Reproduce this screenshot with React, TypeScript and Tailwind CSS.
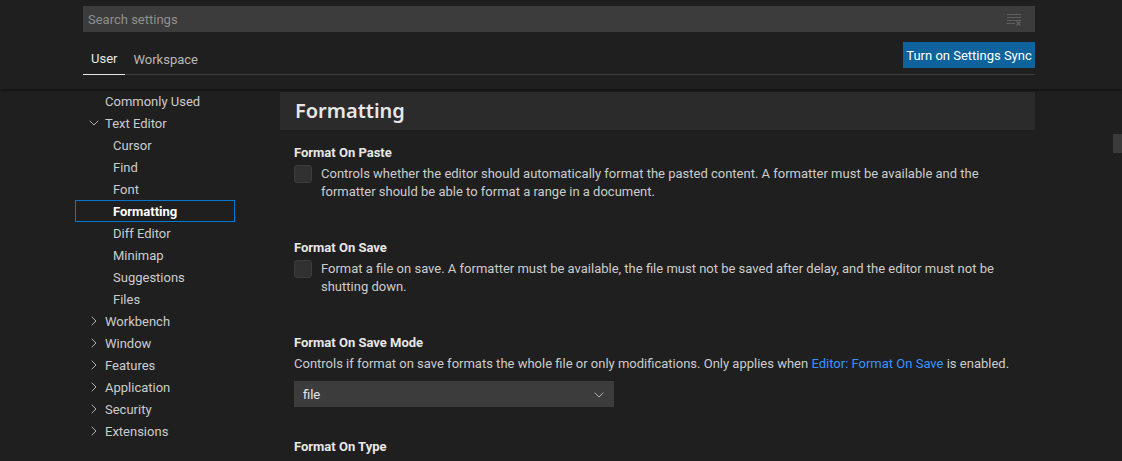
import { ChevronDown, ChevronRight } from 'lucide-react';

type TocItem = { label: string; level: 0 | 1; chevron?: 'open' | 'closed'; selected?: boolean };

const tocItems: TocItem[] = [
  { label: 'Commonly Used', level: 0 },
  { label: 'Text Editor', level: 0, chevron: 'open' },
  { label: 'Cursor', level: 1 },
  { label: 'Find', level: 1 },
  { label: 'Font', level: 1 },
  { label: 'Formatting', level: 1, selected: true },
  { label: 'Diff Editor', level: 1 },
  { label: 'Minimap', level: 1 },
  { label: 'Suggestions', level: 1 },
  { label: 'Files', level: 1 },
  { label: 'Workbench', level: 0, chevron: 'closed' },
  { label: 'Window', level: 0, chevron: 'closed' },
  { label: 'Features', level: 0, chevron: 'closed' },
  { label: 'Application', level: 0, chevron: 'closed' },
  { label: 'Security', level: 0, chevron: 'closed' },
  { label: 'Extensions', level: 0, chevron: 'closed' },
];

function ClearFilterIcon() {
  return (
    <svg width="16" height="16" viewBox="0 0 16 16" fill="none" stroke="#5f5f5f" strokeWidth="1">
      <path d="M1 3.5h14M1 6.5h14M1 9.5h14M1 12.5h8" />
      <path d="M10.5 10.5l4 4M14.5 10.5l-4 4" strokeWidth="1.4" />
    </svg>
  );
}

function Checkbox() {
  return <div className="mt-[1px] h-[18px] w-[18px] shrink-0 rounded-[3px] border border-[#3c3c3c] bg-[#313131]" />;
}

export default function App() {
  return (
    <div className="relative h-[461px] w-full overflow-hidden bg-[#1f1f1f] font-['Roboto',sans-serif] text-[13px] text-[#cccccc]">
      {/* Header */}
      <div className="relative z-10 h-[89px] bg-[#1f1f1f] shadow-[0_1px_3px_rgba(0,0,0,0.6)]">
        <div className="ml-[83px] w-[952px] pt-[6px]">
          <div className="flex h-[26px] items-center justify-between bg-[#3c3c3c] pl-[5px] pr-[13px]">
            <span className="pt-[1px] text-[#8f8f8f]">Search settings</span>
            <ClearFilterIcon />
          </div>
          <div className="mt-[10px] flex h-[33px] items-start justify-between border-b border-[#3c3c3c]">
            <div className="flex h-full">
              <div className="flex h-[33px] items-center border-b border-[#e7e7e7] px-[8px] pt-[2px] text-[#e7e7e7]">User</div>
              <div className="flex h-[33px] items-center px-[8px] pt-[2px] text-[#b8b8b8]">Workspace</div>
            </div>
            <div className="flex h-[26px] w-[132px] items-center justify-center bg-[#0e639c] pt-[1px] text-white">Turn on Settings Sync</div>
          </div>
        </div>
      </div>

      {/* Body */}
      <div className="flex">
        {/* Table of contents */}
        <div className="ml-[75px] w-[160px] pt-[1px]">
          {tocItems.map((item) => (
            <div
              key={item.label}
              className={
                'flex h-[22px] items-center pt-[2px] ' +
                (item.selected ? 'outline outline-1 -outline-offset-1 outline-[#0078d4] font-bold text-white ' : '') +
                (item.chevron ? 'pl-[11px]' : item.level === 0 ? 'pl-[30px]' : 'pl-[38px]')
              }
            >
              {item.chevron === 'open' && <ChevronDown className="mr-[3px] -mt-[2px] h-4 w-4 text-[#c5c5c5]" strokeWidth={1.3} />}
              {item.chevron === 'closed' && <ChevronRight className="mr-[3px] -mt-[2px] h-4 w-4 text-[#c5c5c5]" strokeWidth={1.3} />}
              <span>{item.label}</span>
            </div>
          ))}
        </div>

        {/* Settings list */}
        <div className="ml-[45px] w-[755px] pt-[3px]">
          <div className="flex h-[38px] items-center bg-[#2b2b2b] pl-[15px] font-['Noto_Sans',sans-serif] text-[20px] font-semibold text-[#e7e7e7]">
            Formatting
          </div>

          <div className="pl-[14px]">
            {/* Format On Paste */}
            <div className="pt-[14px]">
              <div className="h-[18px] leading-[18px] font-bold text-[#e7e7e7]">Format On Paste</div>
              <div className="mt-[2px] flex gap-[9px]">
                <Checkbox />
                <div className="pt-[1px] leading-[18px]">
                  <div>Controls whether the editor should automatically format the pasted content. A formatter must be available and the</div>
                  <div>formatter should be able to format a range in a document.</div>
                </div>
              </div>
            </div>

            {/* Format On Save */}
            <div className="pt-[38px]">
              <div className="h-[18px] leading-[18px] font-bold text-[#e7e7e7]">Format On Save</div>
              <div className="mt-[2px] flex gap-[9px]">
                <Checkbox />
                <div className="pt-[1px] leading-[18px]">
                  <div>Format a file on save. A formatter must be available, the file must not be saved after delay, and the editor must not be</div>
                  <div>shutting down.</div>
                </div>
              </div>
            </div>

            {/* Format On Save Mode */}
            <div className="pt-[38px]">
              <div className="h-[18px] leading-[18px] font-bold text-[#e7e7e7]">Format On Save Mode</div>
              <div className="mt-[3px] leading-[18px]">
                Controls if format on save formats the whole file or only modifications. Only applies when{' '}
                <span className="text-[#3794ff]">Editor: Format On Save</span> is enabled.
              </div>
              <div className="mt-[8px] flex h-[26px] w-[320px] items-center justify-between border border-[#3c3c3c] bg-[#3c3c3c] pl-[8px] pr-[6px] pt-[1px] text-[#e7e7e7]">
                <span>file</span>
                <ChevronDown className="h-4 w-4 text-[#c5c5c5]" strokeWidth={1.3} />
              </div>
            </div>

            {/* Format On Type */}
            <div className="pt-[31px]">
              <div className="h-[18px] leading-[18px] font-bold text-[#e7e7e7]">Format On Type</div>
            </div>
          </div>
        </div>
      </div>

      {/* Scrollbar slider */}
      <div className="absolute right-0 top-[134px] h-[19px] w-[9px] bg-[#3a3a3a]" />
    </div>
  );
}
